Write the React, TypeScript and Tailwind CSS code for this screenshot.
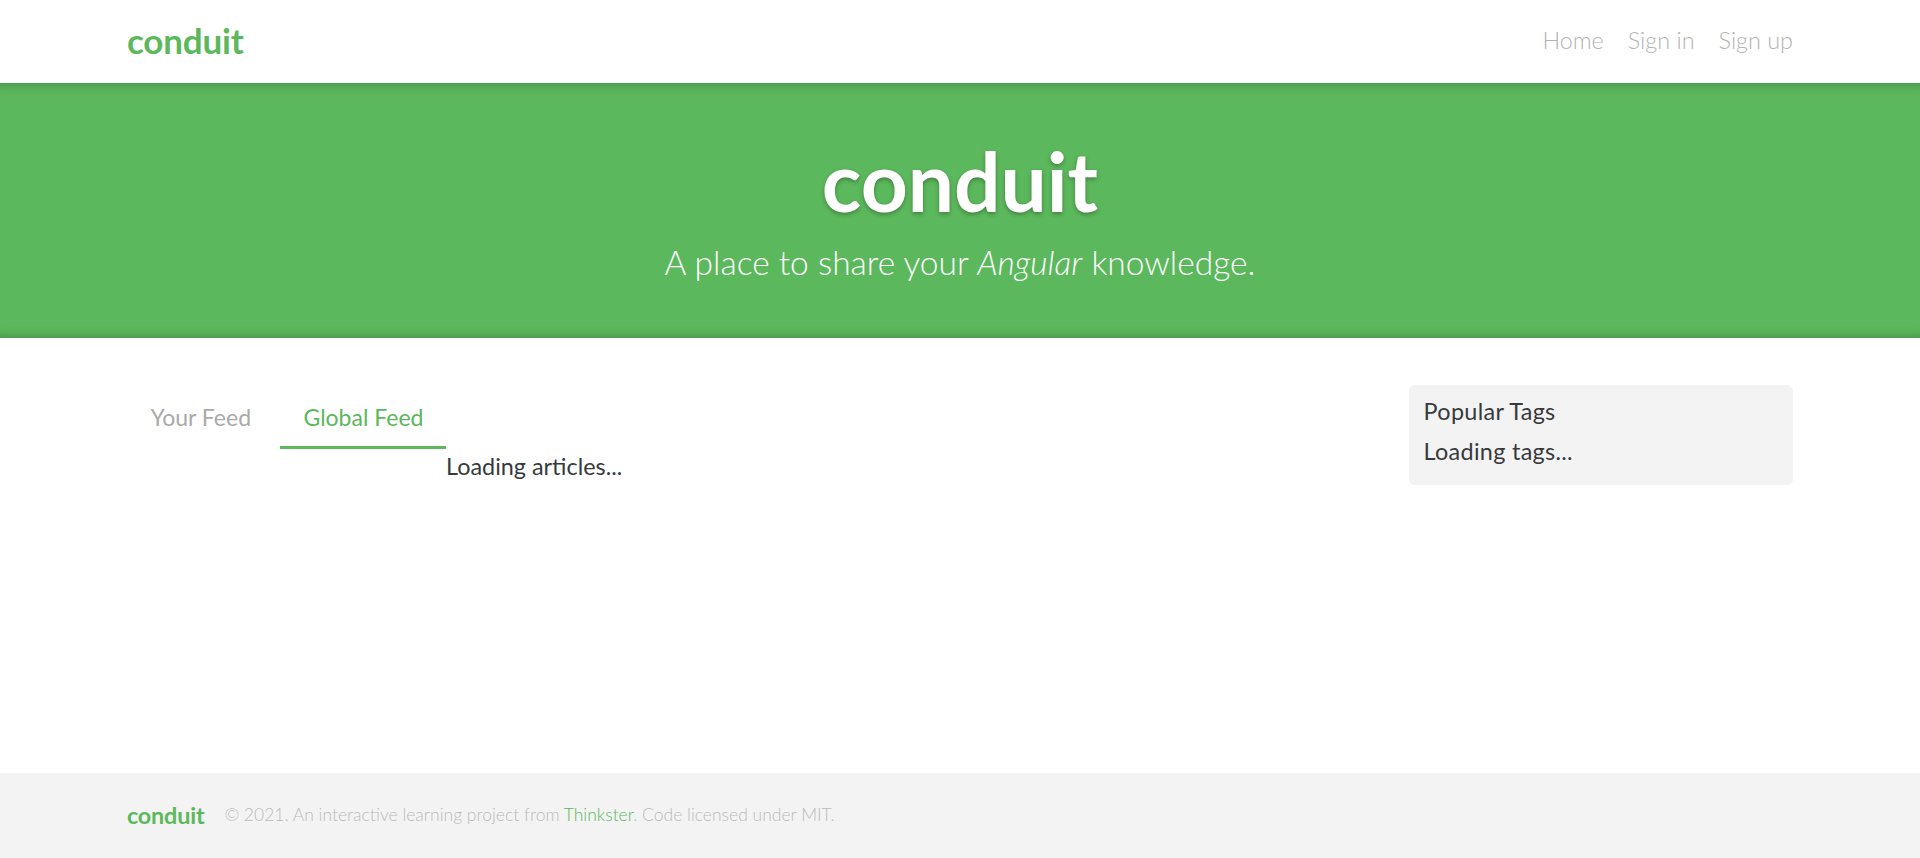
import React from 'react';

const green = 'text-[#5cb85c]';

function Navbar() {
  return (
    <nav className="h-[83px] bg-white">
      <div className="w-[1666px] mx-auto h-full flex items-center justify-between">
        <a className={`font-bold text-[35px] leading-none ${green} tracking-[-0.2px] -mt-[2px]`}>
          conduit
        </a>
        <ul className="flex items-center gap-[24px] text-[23.4px] leading-[35px] text-[#b3b3b3] font-light -mt-[2px]">
          <li>Home</li>
          <li>Sign in</li>
          <li>Sign up</li>
        </ul>
      </div>
    </nav>
  );
}

function Banner() {
  return (
    <div className="h-[255px] bg-[#5cb85c] text-white flex flex-col items-center justify-center shadow-[inset_0_12px_12px_-12px_rgba(0,0,0,0.3),inset_0_-12px_12px_-12px_rgba(0,0,0,0.3)]">
      <h1 className="font-bold text-[82px] leading-[90px] pb-[12px] [text-shadow:0_1.5px_4px_rgba(0,0,0,0.3)]">
        conduit
      </h1>
      <p className="text-[33.5px] leading-[50px] font-light">
        A place to share your <i>Angular</i> knowledge.
      </p>
    </div>
  );
}

function Feed() {
  return (
    <div className="flex-1">
      <ul className="flex text-[23px] leading-[35px]">
        <li>
          <a className="block px-[23.4px] pt-[11.7px] pb-[11.7px] border-b-[3px] border-transparent text-[#aaa]">
            Your Feed
          </a>
        </li>
        <li className="ml-[6px]">
          <a className={`block px-[23px] pt-[11.7px] pb-[11.7px] border-b-[3px] border-[#5cb85c] ${green}`}>
            Global Feed
          </a>
        </li>
      </ul>
      <div className="ml-[319px] text-[23.4px] leading-[35px]">Loading articles...</div>
    </div>
  );
}

function Sidebar() {
  return (
    <div className="w-[384px] shrink-0 -mt-[3px]">
      <div className="bg-[#f3f3f4] rounded-[6px] pt-[9px] px-[14.6px] pb-[16px] text-[23.4px] leading-[35px] tracking-[0.3px]">
        <p className="mb-[4.7px]">Popular Tags</p>
        <div>Loading tags...</div>
      </div>
    </div>
  );
}

function Footer() {
  return (
    <footer className="mt-auto h-[85px] bg-[#f3f3f3]">
      <div className="w-[1666px] mx-auto h-full flex items-center">
        <a className={`font-bold text-[23.4px] ${green} mr-[20px] tracking-[-0.2px]`}>conduit</a>
        <span className="text-[17.5px] font-light text-[#bbb]">
          © 2021. An interactive learning project from <a className={green}>Thinkster</a>. Code licensed under MIT.
        </span>
      </div>
    </footer>
  );
}

export default function App() {
  return (
    <div className="min-h-screen flex flex-col bg-white font-['Lato',sans-serif] text-[#373a3c]">
      <Navbar />
      <Banner />
      <main className="w-[1666px] mx-auto mt-[50px] flex gap-[44px]">
        <Feed />
        <Sidebar />
      </main>
      <Footer />
    </div>
  );
}
